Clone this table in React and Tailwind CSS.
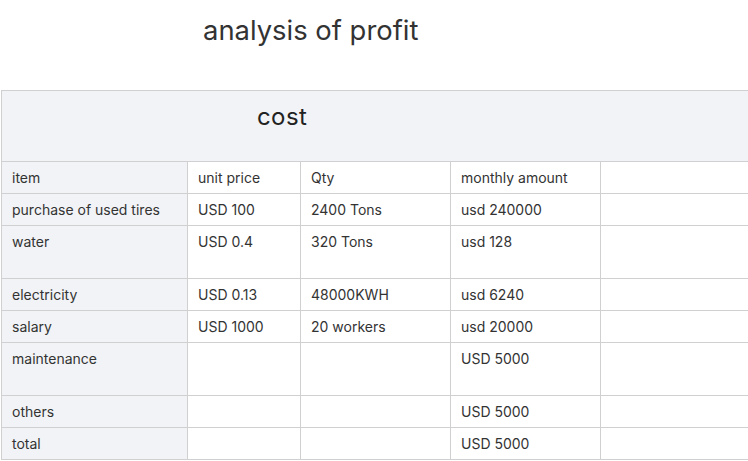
import React from 'react';

const rows = [
  { cells: ['item', 'unit price', 'Qty', 'monthly amount', ''], h: 'h-[32px]' },
  { cells: ['purchase of used tires', 'USD 100', '2400 Tons', 'usd 240000', ''], h: 'h-[32px]' },
  { cells: ['water', 'USD 0.4', '320 Tons', 'usd 128', ''], h: 'h-[53px]' },
  { cells: ['electricity', 'USD 0.13', '48000KWH', 'usd 6240', ''], h: 'h-[32px]' },
  { cells: ['salary', 'USD 1000', '20 workers', 'usd 20000', ''], h: 'h-[32px]' },
  { cells: ['maintenance', '', '', 'USD 5000', ''], h: 'h-[53px]' },
  { cells: ['others', '', '', 'USD 5000', ''], h: 'h-[32px]' },
  { cells: ['total', '', '', 'USD 5000', ''], h: 'h-[32px]' },
];

const App = () => {
  return (
    <div className="w-[748px] h-[461px] overflow-hidden bg-white text-[#333] font-['Inter',sans-serif]">
      {/* Title */}
      <h1 className="pl-[203px] pt-[13px] h-[90px] text-[27.4px] leading-[34px] font-normal text-[#333]">
        analysis of profit
      </h1>

      {/* Cost table */}
      <table className="ml-px w-[820px] table-fixed border-collapse text-[14px] leading-[20px]">
        <colgroup>
          <col className="w-[186px]" />
          <col className="w-[113px]" />
          <col className="w-[150px]" />
          <col className="w-[150px]" />
          <col />
        </colgroup>
        <thead>
          <tr className="h-[71px]">
            <th
              colSpan={5}
              className="border border-[#d0d0d0] bg-[#f2f3f6] pl-[255px] pb-[19px] text-left align-middle text-[24px] tracking-[0.4px] font-normal text-[#222]"
            >
              cost
            </th>
          </tr>
        </thead>
        <tbody>
          {rows.map((row, i) => (
            <tr key={i} className={row.h}>
              {row.cells.map((c, j) => (
                <td
                  key={j}
                  className={`border border-[#d0d0d0] px-[10px] pt-[6px] align-top ${j === 0 ? 'bg-[#f2f3f6]' : 'bg-white'}`}
                >
                  {c}
                </td>
              ))}
            </tr>
          ))}
        </tbody>
      </table>
    </div>
  );
};

export default App;
